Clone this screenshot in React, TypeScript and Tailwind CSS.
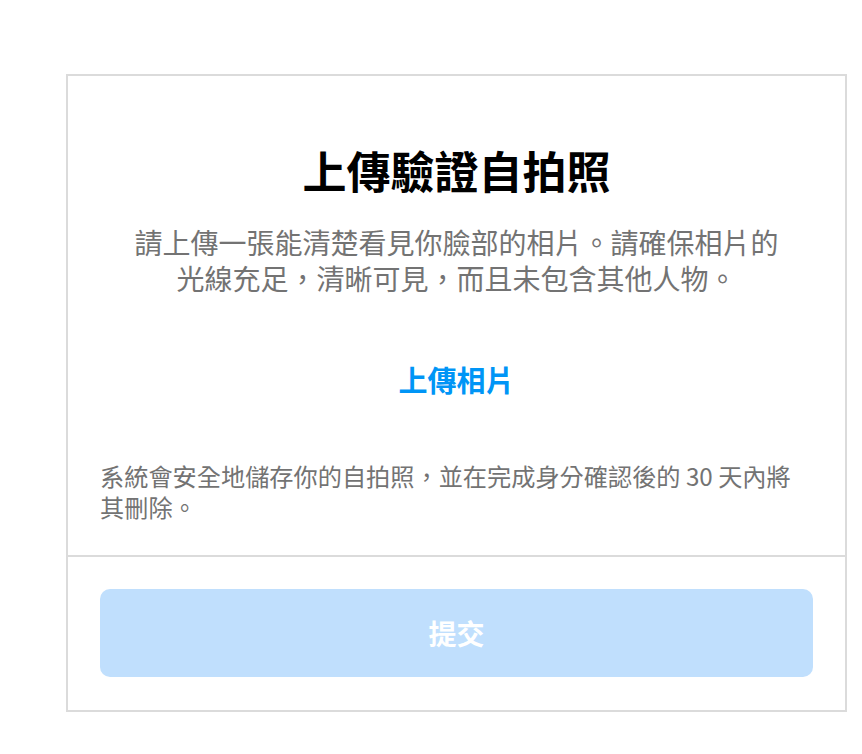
import React from "react";

export default function App() {
  return (
    <div
      className="min-h-[754px] w-full bg-white"
      style={{ fontFamily: '"Noto Sans CJK TC", "Noto Sans", sans-serif' }}
    >
      <div className="pt-[74px] pl-[66px]">
        <div className="w-[781px] border-2 border-[#dbdbdb] bg-white">
          <div className="px-[32px] pt-[67px]">
            <h1 className="text-center text-[44px] font-bold leading-[54px] text-black">
              上傳驗證自拍照
            </h1>
            <p className="mx-auto mt-[27px] max-w-[660px] text-center text-[28px] leading-[36px] text-[#737373]">
              請上傳一張能清楚看見你臉部的相片。請確保相片的光線充足，清晰可見，而且未包含其他人物。
            </p>
            <div className="mt-[65px] text-center">
              <button className="text-[29px] font-bold leading-[36px] text-[#0095f6]">
                上傳相片
              </button>
            </div>
            <p className="mt-[63px] pb-[33px] pr-[4px] text-[24.2px] leading-[31px] text-[#737373]">
              系統會安全地儲存你的自拍照，並在完成身分確認後的 30 天內將其刪除。
            </p>
          </div>
          <div className="border-t-2 border-[#dbdbdb] px-[32px] pt-[32px] pb-[33px]">
            <button className="flex h-[88px] w-full items-center justify-center rounded-[10px] bg-[#c0dffd] text-[28px] font-bold text-white">
              提交
            </button>
          </div>
        </div>
      </div>
    </div>
  );
}
